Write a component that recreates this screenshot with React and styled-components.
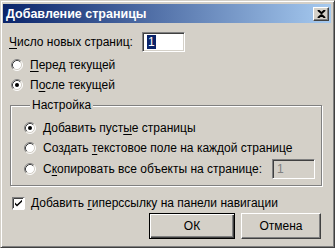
import React from 'react'
import styled, { createGlobalStyle } from 'styled-components'

const Global = createGlobalStyle`
	html, body {
		margin: 0;
		padding: 0;
		background: #d4d0c8;
	}
	* {
		box-sizing: border-box;
	}
`

const Window = styled.div`
	width: 335px;
	height: 248px;
	background: #d4d0c8;
	border: 1px solid;
	border-color: #d4d0c8 #404040 #404040 #d4d0c8;
	box-shadow: inset 1px 1px 0 #fff, inset -1px -1px 0 #808080;
	padding: 3px 3px 0 2px;
	font-family: 'Liberation Sans', Arial, sans-serif;
	font-size: 12px;
	color: #000;
	white-space: nowrap;
	display: flex;
	flex-direction: column;
`

const TitleBar = styled.div`
	height: 19px;
	background: linear-gradient(to right, #0a246a, #a6caf0);
	display: flex;
	align-items: center;
	justify-content: space-between;
	padding: 0 2px 0 3px;
`

const Title = styled.span`
	color: #fff;
	font-weight: bold;
	font-size: 12.5px;
`

const CloseButton = styled.div`
	width: 16px;
	height: 14px;
	background: #d4d0c8;
	border: 1px solid;
	border-color: #fff #404040 #404040 #fff;
	box-shadow: inset -1px -1px 0 #808080;
	display: flex;
	align-items: center;
	justify-content: center;
`

const Body = styled.div`
	flex: 1;
	display: flex;
	flex-direction: column;
	padding: 9px 6px 0 5px;
`

const CountRow = styled.div`
	display: flex;
	align-items: center;
	height: 20px;
	margin-bottom: 3px;
`

const Label = styled.span`
	width: 134px;
	padding-left: 1px;
`

const TextBox = styled.div`
	width: 43px;
	height: 20px;
	border: 1px solid;
	border-color: #808080 #fff #fff #808080;
	box-shadow: inset 1px 1px 0 #404040, inset -1px -1px 0 #d4d0c8;
	background: ${p => (p.$disabled ? '#d4d0c8' : '#fff')};
	color: ${p => (p.$disabled ? '#808080' : '#000')};
	display: flex;
	align-items: center;
	padding-left: 4px;
`

const Selected = styled.span`
	background: #0a246a;
	color: #fff;
	line-height: 14px;
	padding: 0 1px;
`

const OptionRow = styled.div`
	display: flex;
	align-items: center;
	height: ${p => p.$h || 20}px;
	gap: 7px;
	padding-left: ${p => p.$indent || 3}px;
`

const U = styled.span`
	text-decoration: underline;
	text-underline-offset: 2px;
`

const Group = styled.fieldset`
	margin: 3px 3px 0 2px;
	padding: 6px 0 5px 12px;
	border: 1px solid #808080;
	box-shadow: 1px 1px 0 #fff, inset 1px 1px 0 #fff;
	display: flex;
	flex-direction: column;
`

const Legend = styled.legend`
	padding: 0 2px;
	margin-left: 7px;
	background: #d4d0c8;
	font-size: 12px;
`

const CopyRow = styled.div`
	display: flex;
	align-items: center;
	justify-content: space-between;
	padding-right: 6px;
`

const CheckRow = styled.div`
	display: flex;
	align-items: center;
	height: 20px;
	gap: 6px;
	margin-top: 7px;
	padding-left: 4px;
`

const Buttons = styled.div`
	display: flex;
	justify-content: flex-end;
	gap: 6px;
	padding-right: 4px;
`

const Button = styled.div`
	width: ${p => p.$w}px;
	height: 26px;
	display: flex;
	align-items: center;
	justify-content: center;
	background: #d4d0c8;
	border: 1px solid;
	border-color: ${p => (p.$default ? '#000' : '#fff #404040 #404040 #fff')};
	box-shadow: ${p =>
		p.$default
			? 'inset 1px 1px 0 #fff, inset -1px -1px 0 #404040, inset -2px -2px 0 #808080'
			: 'inset -1px -1px 0 #808080'};
`

function Radio({ checked }) {
	return (
		<svg width="12" height="12" viewBox="0 0 12 12">
			<circle cx="6" cy="6" r="5" fill="#fff" />
			<path d="M2.11 9.89 A5.5 5.5 0 0 1 9.89 2.11" stroke="#808080" fill="none" />
			<path d="M9.89 2.11 A5.5 5.5 0 0 1 2.11 9.89" stroke="#fff" fill="none" />
			<path d="M2.82 9.18 A4.5 4.5 0 0 1 9.18 2.82" stroke="#404040" fill="none" />
			<path d="M9.18 2.82 A4.5 4.5 0 0 1 2.82 9.18" stroke="#d4d0c8" fill="none" />
			{checked && <circle cx="6" cy="6" r="2" fill="#000" />}
		</svg>
	)
}

function Check() {
	return (
		<svg width="13" height="13" viewBox="0 0 13 13">
			<rect x="0.5" y="0.5" width="12" height="12" fill="#fff" stroke="#808080" />
			<path d="M0.5 12.5 H12.5 V0.5" stroke="#fff" fill="none" />
			<path d="M1.5 11 V1.5 H11" stroke="#404040" fill="none" />
			<path d="M3 5.5 L5 7.5 L10 2.8 V4.8 L5 9.5 L3 7.5 Z" fill="#000" />
		</svg>
	)
}

export default function App() {
	return (
		<>
			<Global />
			<Window>
				<TitleBar>
					<Title>Добавление страницы</Title>
					<CloseButton>
						<svg width="9" height="8" viewBox="0 0 9 8">
							<path d="M1 0 L4.5 3.2 L8 0 M1 8 L4.5 4.8 L8 8" stroke="#000" strokeWidth="2" fill="none" />
						</svg>
					</CloseButton>
				</TitleBar>
				<Body>
					<CountRow>
						<Label>
							<U>Ч</U>исло новых страниц:
						</Label>
						<TextBox>
							<Selected>1</Selected>
						</TextBox>
					</CountRow>
					<OptionRow>
						<Radio />
						<span>
							<U>П</U>еред текущей
						</span>
					</OptionRow>
					<OptionRow>
						<Radio checked />
						<span>
							П<U>о</U>сле текущей
						</span>
					</OptionRow>
					<Group>
						<Legend>Настройка</Legend>
						<OptionRow $indent={1}>
							<Radio checked />
							<span>
								Добавить пуст<U>ы</U>е страницы
							</span>
						</OptionRow>
						<OptionRow $indent={1}>
							<Radio />
							<span>
								Создать <U>т</U>екстовое поле на каждой странице
							</span>
						</OptionRow>
						<CopyRow>
							<OptionRow $indent={1} $h={22}>
								<Radio />
								<span>
									С<U>к</U>опировать все объекты на странице:
								</span>
							</OptionRow>
							<TextBox $disabled>1</TextBox>
						</CopyRow>
					</Group>
					<CheckRow>
						<Check />
						<span>
							Добавить <U>г</U>иперссылку на панели навигации
						</span>
					</CheckRow>
					<Buttons>
						<Button $w={86} $default>
							ОК
						</Button>
						<Button $w={80}>Отмена</Button>
					</Buttons>
				</Body>
			</Window>
		</>
	)
}
